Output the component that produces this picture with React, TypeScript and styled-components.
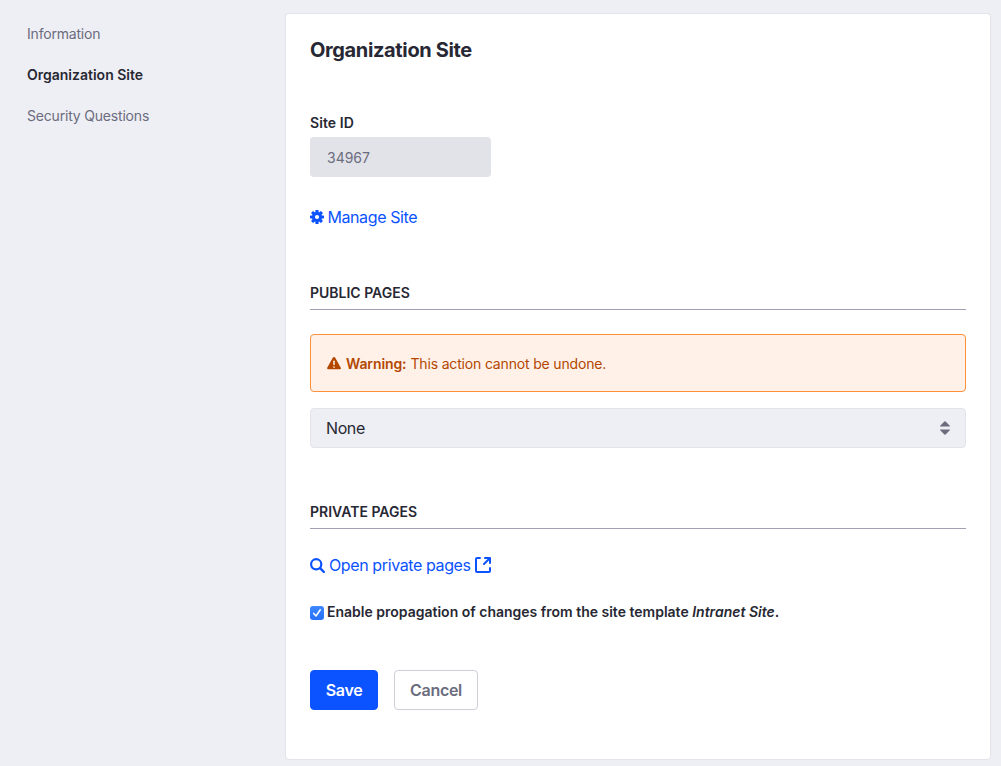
import React from 'react';
import styled, { createGlobalStyle } from 'styled-components';

const GlobalStyle = createGlobalStyle`
  *, *::before, *::after { box-sizing: border-box; }
  body {
    margin: 0;
    background: #eeeff4;
    color: #272833;
    font-family: Inter, 'Liberation Sans', sans-serif;
    font-size: 14px;
    line-height: 20px;
  }
`;

const Page = styled.div`
  display: flex;
  min-height: 766px;
  padding: 13px 10px 6px 0;
`;

const SideNav = styled.nav`
  display: flex;
  flex-direction: column;
  gap: 21px;
  width: 285px;
  flex: none;
  padding: 11px 27px;
`;

const NavItem = styled.a<{ $active?: boolean }>`
  color: ${(p) => (p.$active ? '#272833' : '#6b6c7e')};
  font-weight: ${(p) => (p.$active ? 600 : 400)};
  letter-spacing: ${(p) => (p.$active ? '0' : '-0.19px')};
  white-space: nowrap;
`;

const Sheet = styled.main`
  display: flex;
  flex-direction: column;
  align-items: flex-start;
  flex: 1;
  min-width: 0;
  padding: 24px 24px 49px;
  background: #fff;
  border: 1px solid #e3e4ea;
  border-radius: 4px;
`;

const Title = styled.h2`
  margin: 0 0 51px;
  font-size: 20px;
  line-height: 24px;
  font-weight: 700;
  letter-spacing: -0.36px;
`;

const Label = styled.label`
  margin-bottom: 4px;
  font-weight: 600;
  letter-spacing: 0.08px;
`;

const DisabledInput = styled.div`
  display: flex;
  align-items: center;
  width: 181px;
  height: 40px;
  padding: 2px 17px 0;
  border-radius: 4px;
  background: #e2e3e9;
  color: #6b6c7e;
`;

const Link = styled.a<{ $top: number; $gap: number }>`
  display: flex;
  align-items: center;
  gap: ${(p) => p.$gap}px;
  margin-top: ${(p) => p.$top}px;
  color: #0b53ff;
  font-size: 16px;
  line-height: 24px;
  letter-spacing: -0.39px;
  white-space: nowrap;
`;

const SectionTitle = styled.h3`
  align-self: stretch;
  margin: 54px 0 24px;
  padding-bottom: 6px;
  border-bottom: 1px solid #a0a1b2;
  font-size: 14px;
  line-height: 20px;
  font-weight: 600;
  text-transform: uppercase;
`;

const Alert = styled.div`
  display: flex;
  align-items: center;
  align-self: stretch;
  height: 58px;
  margin-bottom: 16px;
  padding: 2px 16px 0;
  border: 1px solid #ff8f39;
  border-radius: 4px;
  background: #fff1e8;
  color: #b34700;
  letter-spacing: -0.17px;
  svg { margin: -2px 5px 0 0; }
  strong { margin-right: 4px; font-weight: 600; letter-spacing: -0.1px; }
`;

const Select = styled.div`
  display: flex;
  align-items: center;
  justify-content: space-between;
  align-self: stretch;
  height: 40px;
  padding: 0 15px;
  border: 1px solid #e3e4ea;
  border-radius: 4px;
  background: #eeeff4;
  font-size: 16px;
  letter-spacing: -0.4px;
`;

const CheckRow = styled.label`
  display: flex;
  align-items: center;
  gap: 3px;
  margin-top: 25px;
  font-weight: 600;
  white-space: nowrap;
`;

const CheckBox = styled.span`
  display: flex;
  width: 14px;
  height: 14px;
  margin-top: 2px;
  border-radius: 3px;
  background: linear-gradient(#3f88fd, #2470fb);
`;

const Actions = styled.div`
  display: flex;
  gap: 16px;
  margin-top: 48px;
`;

const Button = styled.button<{ $primary?: boolean }>`
  width: ${(p) => (p.$primary ? 68 : 84)}px;
  height: 40px;
  padding: 0;
  border: 1px solid ${(p) => (p.$primary ? '#0b53ff' : '#cdced9')};
  border-radius: 4px;
  background: ${(p) => (p.$primary ? '#0b53ff' : '#fff')};
  color: ${(p) => (p.$primary ? '#fff' : '#6b6c7e')};
  font: 600 16px/24px Inter, 'Liberation Sans', sans-serif;
  letter-spacing: -0.3px;
`;

const GearIcon = () => (
  <svg width="14" height="14" viewBox="0 0 14 14">
    <g fill="currentColor">
      {[0, 45, 90, 135].map((a) => (
        <rect key={a} x="5.4" y="0" width="3.2" height="14" rx="0.6" transform={`rotate(${a} 7 7)`} />
      ))}
      <circle cx="7" cy="7" r="5" />
    </g>
    <circle cx="7" cy="7" r="2.1" fill="#fff" />
  </svg>
);

const WarningIcon = () => (
  <svg width="14" height="14" viewBox="0 0 14 14">
    <path
      fill="currentColor"
      d="M5.9 1.6a1.25 1.25 0 0 1 2.2 0l5.7 10.1c.4.7 0 1.5-.8 1.5H1c-.8 0-1.2-.8-.8-1.5z"
    />
    <path d="M7 5.2v3.2" stroke="#fff1e8" strokeWidth="1.5" strokeLinecap="round" />
    <circle cx="7" cy="11" r="0.85" fill="#fff1e8" />
  </svg>
);

const SearchIcon = () => (
  <svg width="15" height="15" viewBox="0 0 15 15" fill="none" stroke="currentColor">
    <circle cx="6.2" cy="6.3" r="5.1" strokeWidth="2.2" />
    <path d="M10.3 10.4l3.5 3.5" strokeWidth="2.3" strokeLinecap="round" />
  </svg>
);

const ShortcutIcon = () => (
  <svg width="16" height="16" viewBox="0 0 16 16" fill="none" stroke="currentColor" strokeWidth="2">
    <path d="M5 1H2a1 1 0 0 0-1 1v12a1 1 0 0 0 1 1h12a1 1 0 0 0 1-1v-3" strokeLinecap="round" />
    <path d="M9 7L14 2" strokeLinecap="round" />
    <path d="M10 1h5v5" strokeLinecap="round" strokeLinejoin="round" />
  </svg>
);

const CaretIcon = () => (
  <svg width="10" height="14" viewBox="0 0 10 14" fill="#6b6c7e">
    <path d="M.4 5.5h9.2c.4 0 .5-.4.2-.7L5.6.5a.85.85 0 0 0-1.2 0L.2 4.8c-.3.3-.2.7.2.7z" />
    <path d="M.4 8.5h9.2c.4 0 .5.4.2.7L5.6 13.5a.85.85 0 0 1-1.2 0L.2 9.2c-.3-.3-.2-.7.2-.7z" />
  </svg>
);

const CheckIcon = () => (
  <svg width="14" height="14" viewBox="0 0 14 14">
    <path d="M3.7 7.4L6 10l4.3-6.2" fill="none" stroke="#fff" strokeWidth="1.5" strokeLinecap="round" strokeLinejoin="round" />
  </svg>
);

export default function App() {
  return (
    <>
      <GlobalStyle />
      <Page>
        <SideNav>
          <NavItem>Information</NavItem>
          <NavItem $active>Organization Site</NavItem>
          <NavItem>Security Questions</NavItem>
        </SideNav>
        <Sheet>
          <Title>Organization Site</Title>
          <Label>Site ID</Label>
          <DisabledInput>34967</DisabledInput>
          <Link $top={28} $gap={3.4}>
            <GearIcon />
            <span>Manage Site</span>
          </Link>
          <SectionTitle>Public Pages</SectionTitle>
          <Alert>
            <WarningIcon />
            <strong>Warning:</strong>
            <span>This action cannot be undone.</span>
          </Alert>
          <Select>
            <span>None</span>
            <CaretIcon />
          </Select>
          <SectionTitle>Private Pages</SectionTitle>
          <Link $top={0} $gap={4}>
            <SearchIcon />
            <span>Open private pages</span>
            <ShortcutIcon />
          </Link>
          <CheckRow>
            <CheckBox>
              <CheckIcon />
            </CheckBox>
            <span>
              Enable propagation of changes from the site template <em>Intranet Site</em>.
            </span>
          </CheckRow>
          <Actions>
            <Button $primary>Save</Button>
            <Button>Cancel</Button>
          </Actions>
        </Sheet>
      </Page>
    </>
  );
}
